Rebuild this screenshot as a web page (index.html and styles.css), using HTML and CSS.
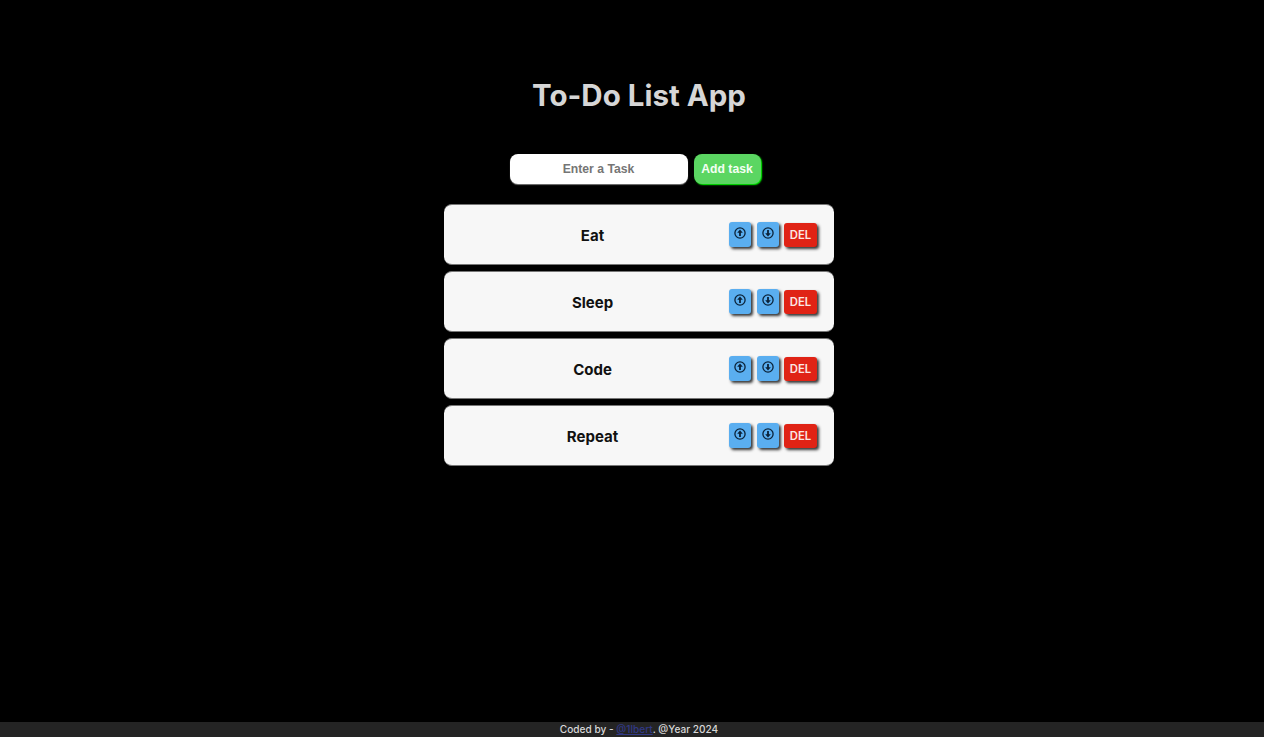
FILE: index.html
```html
<!DOCTYPE html>
<html lang="en">
<head>
<meta charset="utf-8">
<title>To-Do List App</title>
<link rel="stylesheet" href="styles.css">
</head>
<body>
<svg width="0" height="0" class="defs">
  <symbol id="up" viewBox="0 0 12 12"><circle cx="6" cy="6" r="5.1" fill="none" stroke="#0b2238" stroke-width="1.3"/><path d="M6 2.6 8.8 5.7H6.9V9H5.1V5.7H3.2Z" fill="#0b2238"/></symbol>
  <symbol id="down" viewBox="0 0 12 12"><circle cx="6" cy="6" r="5.1" fill="none" stroke="#0b2238" stroke-width="1.3"/><path d="M6 9.4 3.2 6.3H5.1V3H6.9V6.3H8.8Z" fill="#0b2238"/></symbol>
</svg>
<main class="app">
  <h1 class="title">To-Do List App</h1>
  <form class="entry">
    <input class="field" type="text" placeholder="Enter a Task">
    <button class="add" type="button">Add task</button>
  </form>
  <ul class="list">
    <li class="task"><span class="name">Eat</span><button class="move"><svg class="icon"><use href="#up"/></svg></button><button class="move"><svg class="icon"><use href="#down"/></svg></button><button class="del">DEL</button></li>
    <li class="task"><span class="name">Sleep</span><button class="move"><svg class="icon"><use href="#up"/></svg></button><button class="move"><svg class="icon"><use href="#down"/></svg></button><button class="del">DEL</button></li>
    <li class="task"><span class="name">Code</span><button class="move"><svg class="icon"><use href="#up"/></svg></button><button class="move"><svg class="icon"><use href="#down"/></svg></button><button class="del">DEL</button></li>
    <li class="task"><span class="name">Repeat</span><button class="move"><svg class="icon"><use href="#up"/></svg></button><button class="move"><svg class="icon"><use href="#down"/></svg></button><button class="del">DEL</button></li>
  </ul>
</main>
<footer class="footer"><p class="credit">Coded by - <a class="author" href="#">@1lbert</a>. @Year 2024</p></footer>
</body>
</html>
```
FILE: styles.css
```css
* { box-sizing: border-box; }
body {
  margin: 0;
  height: 737px;
  display: flex;
  flex-direction: column;
  background: #000;
  font-family: Inter, "Liberation Sans", sans-serif;
  overflow: hidden;
}
.defs { display: block; height: 0; flex: none; }
.app { flex: 1; width: 390px; margin-left: 444px; }
.title {
  margin: 75px 0 0;
  height: 40px;
  line-height: 40px;
  font-size: 29.5px;
  font-weight: 700;
  text-align: center;
  color: #d6d6d6;
  white-space: nowrap;
}
.entry { display: flex; gap: 6px; margin: 39px 0 0 66px; }
.field, .add {
  height: 30px;
  border: 0;
  border-radius: 8px;
  font: bold 12.2px "Liberation Sans", Arial, sans-serif;
  text-align: center;
}
.field { width: 178px; padding: 0 3px 1px 2px; background: #fff; box-shadow: 0 1px 1px #777; }
.field::placeholder { color: #757575; opacity: 1; }
.add {
  width: 67px;
  padding: 0 1px 1px 0;
  background: #5bd662;
  color: #f4fff4;
  box-shadow: 1px 1px 1.5px #0f0;
  white-space: nowrap;
}
.list { list-style: none; margin: 20px 0 0; padding: 0; display: grid; gap: 6px; }
.task {
  display: flex;
  align-items: center;
  height: 61px;
  padding: 0 17px 0 12px;
  border: 1px solid #777;
  border-width: 1px 0;
  border-radius: 8px;
  background: #f7f7f7;
}
.name { flex: 1; text-align: center; font-size: 15px; font-weight: 650; color: #111; padding-top: 2px; }
.move, .del {
  border: 0;
  border-radius: 3px;
  padding: 0;
  box-shadow: 2px 2px 3px #333;
}
.move {
  display: flex;
  justify-content: center;
  width: 22px;
  height: 25px;
  padding-top: 5px;
  margin: 0 5.5px 1px 0;
  background: #5aaef0;
}
.icon { width: 12px; height: 12px; }
.del {
  width: 33px;
  height: 24px;
  background: #e02315;
  color: #fbe7e4;
  font: 600 11.3px Inter, sans-serif;
}
.footer { height: 15px; background: #242424; }
.credit {
  margin: 0 0 0 14px;
  text-align: center;
  font-size: 10.1px;
  font-weight: 500;
  line-height: 14px;
  color: #d8d8d8;
}
.author { color: #303885; }
```
